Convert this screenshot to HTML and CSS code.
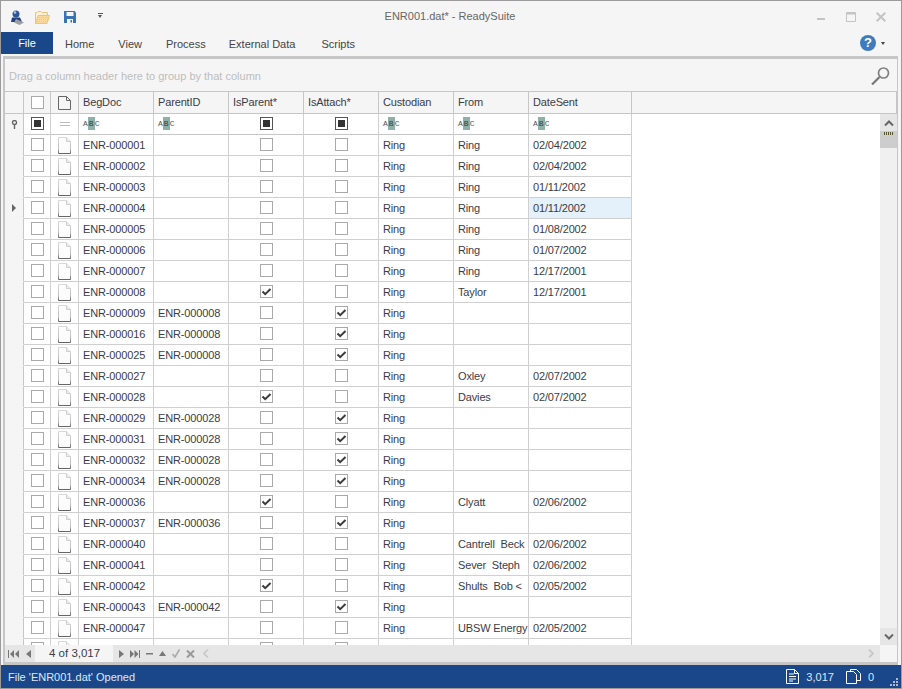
FILE: index.html
```html
<!DOCTYPE html>
<html lang="en">
<head>
<meta charset="utf-8">
<title>ENR001.dat* - ReadySuite</title>
<link rel="stylesheet" href="styles.css">
</head>
<body>
<svg class="defs" width="0" height="0" aria-hidden="true">
  <defs><linearGradient id="docline" x1="0" y1="0" x2="0" y2="1"><stop offset="0" stop-color="#d8d8d8"/><stop offset=".7" stop-color="#c0c0c0"/><stop offset="1" stop-color="#666"/></linearGradient>
  <pattern id="hatch" width="2" height="2" patternUnits="userSpaceOnUse"><rect width="2" height="2" fill="#fbd99c"/><rect width="1" height="1" fill="#f6c67a"/></pattern></defs>
  <symbol id="doc" viewBox="0 0 13 17"><path d="M.5.5H8.5L12.5 4.5V16.5H.5Z" fill="#fcfcfc" stroke="url(#docline)"/><path d="M8.5.5V4.5H12.5" fill="#eee" stroke="#cfcfcf"/></symbol>
  <symbol id="tick" viewBox="0 0 11 11"><path d="M1.5 5.5L4.2 8.2L9.5 3" fill="none" stroke="#3c3c3c" stroke-width="2"/></symbol>
</svg>
<div class="app">
  <header class="titlebar">
    <div class="qat">
      <svg class="qi user" width="14" height="15" viewBox="0 0 14 15"><circle cx="6" cy="4" r="3.5" fill="#2f5597"/><path d="M1 12L2 7.5H10L12 12Z" fill="#1f3f7f"/><path d="M6 9L14 12.5L9.5 15L4 12.5Z" fill="#a0a0a0"/><circle cx="5" cy="2.5" r="1.3" fill="#a9c2e8"/></svg>
      <svg class="qi folder" width="15" height="13" viewBox="0 0 15 13"><path d="M.5 12.5V1.5H2L3 .5H6L7 1.5H12.5V4" fill="#fdf0d6" stroke="#efc27a"/><path d="M.5 12.5L3 4.5H14.5L12 12.5Z" fill="url(#hatch)" stroke="#efc27a"/></svg>
      <svg class="qi save" width="12" height="12" viewBox="0 0 12 12"><path d="M0 0H10.5L12 1.5V12H0Z" fill="#3b73b3"/><path d="M2.5 1H9.5V5H2.5Z" fill="#f5f5f5"/><path d="M3 8H9V12H3Z" fill="#f5f5f5"/><path d="M6.5 9H8V11.5H6.5Z" fill="#3b73b3"/></svg>
      <span class="qdrop"></span>
    </div>
    <div class="wintitle">ENR001.dat* - ReadySuite</div>
    <div class="winbtns">
      <svg class="wmin" width="8" height="10" viewBox="0 0 8 10"><path d="M0 7H8" stroke="#c4c4c4" stroke-width="2"/></svg>
      <svg class="wmax" width="10" height="10" viewBox="0 0 10 10"><path d="M.5 .5H9.5V9.5H.5Z" fill="none" stroke="#c4c4c4"/><path d="M0 1.5H10" stroke="#c4c4c4" stroke-width="2"/></svg>
      <svg class="wcls" width="10" height="10" viewBox="0 0 10 10"><path d="M.7 .7L9.3 9.3M9.3 .7L.7 9.3" stroke="#c4c4c4" stroke-width="2"/></svg>
    </div>
  </header>
  <nav class="tabs">
    <div class="tab file">File</div>
    <div class="tab home">Home</div>
    <div class="tab view">View</div>
    <div class="tab process">Process</div>
    <div class="tab extern">External Data</div>
    <div class="tab scripts">Scripts</div>
    <div class="help"><span class="helpq">?</span><span class="helpdrop"></span></div>
  </nav>
  <main class="frame">
    <div class="grouppanel">
      <span>Drag a column header here to group by that column</span>
      <svg width="19" height="18" viewBox="0 0 19 18"><circle cx="12.5" cy="6" r="5" fill="none" stroke="#808080" stroke-width="1.7"/><path d="M8.5 10L1 17.5" stroke="#777" stroke-width="2.2"/></svg>
    </div>
    <div class="row head">
      <div class="c ind"></div>
      <div class="c chk"><span class="cb"></span></div>
      <div class="c dc"><svg class="d" width="13" height="14" viewBox="0 0 13 14"><path d="M.5.5H8.5L12.5 4.5V13.5H.5Z" fill="none" stroke="#666"/><path d="M8.5.5V4.5H12.5" fill="none" stroke="#666"/></svg></div>
      <div class="c w">BegDoc</div><div class="c w">ParentID</div><div class="c w">IsParent*</div><div class="c w">IsAttach*</div><div class="c w">Custodian</div><div class="c w">From</div><div class="c date">DateSent</div>
      <div class="c rest"></div>
    </div>
    <div class="body">
      <div class="rows">
        <div class="row filter">
          <div class="c ind"><svg width="7" height="9" viewBox="0 0 7 9"><circle cx="3.5" cy="2.5" r="2" fill="none" stroke="#666" stroke-width="1.4"/><path d="M3.5 4V9" stroke="#666" stroke-width="1.4"/></svg></div>
          <div class="c chk"><span class="cb ind-on"><i></i></span></div>
          <div class="c dc"><span class="eq"></span></div>
          <div class="c w"><span class="abc">A<b>B</b>C</span></div><div class="c w"><span class="abc">A<b>B</b>C</span></div>
          <div class="c w mid"><span class="cb ind-on"><i></i></span></div><div class="c w mid"><span class="cb ind-on"><i></i></span></div>
          <div class="c w"><span class="abc">A<b>B</b>C</span></div><div class="c w"><span class="abc">A<b>B</b>C</span></div><div class="c date"><span class="abc">A<b>B</b>C</span></div>
        </div>
        <div class="row"><div class="c ind"></div><div class="c chk"><span class="cb"></span></div><div class="c dc"><svg class="d" width="13" height="17"><use href="#doc"/></svg></div><div class="c w">ENR-000001</div><div class="c w"></div><div class="c w mid"><span class="cb"></span></div><div class="c w mid"><span class="cb"></span></div><div class="c w">Ring</div><div class="c w">Ring</div><div class="c date">02/04/2002</div></div>
        <div class="row"><div class="c ind"></div><div class="c chk"><span class="cb"></span></div><div class="c dc"><svg class="d" width="13" height="17"><use href="#doc"/></svg></div><div class="c w">ENR-000002</div><div class="c w"></div><div class="c w mid"><span class="cb"></span></div><div class="c w mid"><span class="cb"></span></div><div class="c w">Ring</div><div class="c w">Ring</div><div class="c date">02/04/2002</div></div>
        <div class="row"><div class="c ind"></div><div class="c chk"><span class="cb"></span></div><div class="c dc"><svg class="d" width="13" height="17"><use href="#doc"/></svg></div><div class="c w">ENR-000003</div><div class="c w"></div><div class="c w mid"><span class="cb"></span></div><div class="c w mid"><span class="cb"></span></div><div class="c w">Ring</div><div class="c w">Ring</div><div class="c date">01/11/2002</div></div>
        <div class="row"><div class="c ind"><span class="cur"></span></div><div class="c chk"><span class="cb"></span></div><div class="c dc"><svg class="d" width="13" height="17"><use href="#doc"/></svg></div><div class="c w">ENR-000004</div><div class="c w"></div><div class="c w mid"><span class="cb"></span></div><div class="c w mid"><span class="cb"></span></div><div class="c w">Ring</div><div class="c w">Ring</div><div class="c date sel">01/11/2002</div></div>
        <div class="row"><div class="c ind"></div><div class="c chk"><span class="cb"></span></div><div class="c dc"><svg class="d" width="13" height="17"><use href="#doc"/></svg></div><div class="c w">ENR-000005</div><div class="c w"></div><div class="c w mid"><span class="cb"></span></div><div class="c w mid"><span class="cb"></span></div><div class="c w">Ring</div><div class="c w">Ring</div><div class="c date">01/08/2002</div></div>
        <div class="row"><div class="c ind"></div><div class="c chk"><span class="cb"></span></div><div class="c dc"><svg class="d" width="13" height="17"><use href="#doc"/></svg></div><div class="c w">ENR-000006</div><div class="c w"></div><div class="c w mid"><span class="cb"></span></div><div class="c w mid"><span class="cb"></span></div><div class="c w">Ring</div><div class="c w">Ring</div><div class="c date">01/07/2002</div></div>
        <div class="row"><div class="c ind"></div><div class="c chk"><span class="cb"></span></div><div class="c dc"><svg class="d" width="13" height="17"><use href="#doc"/></svg></div><div class="c w">ENR-000007</div><div class="c w"></div><div class="c w mid"><span class="cb"></span></div><div class="c w mid"><span class="cb"></span></div><div class="c w">Ring</div><div class="c w">Ring</div><div class="c date">12/17/2001</div></div>
        <div class="row"><div class="c ind"></div><div class="c chk"><span class="cb"></span></div><div class="c dc"><svg class="d" width="13" height="17"><use href="#doc"/></svg></div><div class="c w">ENR-000008</div><div class="c w"></div><div class="c w mid"><span class="cb on"><svg width="11" height="11"><use href="#tick"/></svg></span></div><div class="c w mid"><span class="cb"></span></div><div class="c w">Ring</div><div class="c w">Taylor</div><div class="c date">12/17/2001</div></div>
        <div class="row"><div class="c ind"></div><div class="c chk"><span class="cb"></span></div><div class="c dc"><svg class="d" width="13" height="17"><use href="#doc"/></svg></div><div class="c w">ENR-000009</div><div class="c w">ENR-000008</div><div class="c w mid"><span class="cb"></span></div><div class="c w mid"><span class="cb on"><svg width="11" height="11"><use href="#tick"/></svg></span></div><div class="c w">Ring</div><div class="c w"></div><div class="c date"></div></div>
        <div class="row"><div class="c ind"></div><div class="c chk"><span class="cb"></span></div><div class="c dc"><svg class="d" width="13" height="17"><use href="#doc"/></svg></div><div class="c w">ENR-000016</div><div class="c w">ENR-000008</div><div class="c w mid"><span class="cb"></span></div><div class="c w mid"><span class="cb on"><svg width="11" height="11"><use href="#tick"/></svg></span></div><div class="c w">Ring</div><div class="c w"></div><div class="c date"></div></div>
        <div class="row"><div class="c ind"></div><div class="c chk"><span class="cb"></span></div><div class="c dc"><svg class="d" width="13" height="17"><use href="#doc"/></svg></div><div class="c w">ENR-000025</div><div class="c w">ENR-000008</div><div class="c w mid"><span class="cb"></span></div><div class="c w mid"><span class="cb on"><svg width="11" height="11"><use href="#tick"/></svg></span></div><div class="c w">Ring</div><div class="c w"></div><div class="c date"></div></div>
        <div class="row"><div class="c ind"></div><div class="c chk"><span class="cb"></span></div><div class="c dc"><svg class="d" width="13" height="17"><use href="#doc"/></svg></div><div class="c w">ENR-000027</div><div class="c w"></div><div class="c w mid"><span class="cb"></span></div><div class="c w mid"><span class="cb"></span></div><div class="c w">Ring</div><div class="c w">Oxley</div><div class="c date">02/07/2002</div></div>
        <div class="row"><div class="c ind"></div><div class="c chk"><span class="cb"></span></div><div class="c dc"><svg class="d" width="13" height="17"><use href="#doc"/></svg></div><div class="c w">ENR-000028</div><div class="c w"></div><div class="c w mid"><span class="cb on"><svg width="11" height="11"><use href="#tick"/></svg></span></div><div class="c w mid"><span class="cb"></span></div><div class="c w">Ring</div><div class="c w">Davies</div><div class="c date">02/07/2002</div></div>
        <div class="row"><div class="c ind"></div><div class="c chk"><span class="cb"></span></div><div class="c dc"><svg class="d" width="13" height="17"><use href="#doc"/></svg></div><div class="c w">ENR-000029</div><div class="c w">ENR-000028</div><div class="c w mid"><span class="cb"></span></div><div class="c w mid"><span class="cb on"><svg width="11" height="11"><use href="#tick"/></svg></span></div><div class="c w">Ring</div><div class="c w"></div><div class="c date"></div></div>
        <div class="row"><div class="c ind"></div><div class="c chk"><span class="cb"></span></div><div class="c dc"><svg class="d" width="13" height="17"><use href="#doc"/></svg></div><div class="c w">ENR-000031</div><div class="c w">ENR-000028</div><div class="c w mid"><span class="cb"></span></div><div class="c w mid"><span class="cb on"><svg width="11" height="11"><use href="#tick"/></svg></span></div><div class="c w">Ring</div><div class="c w"></div><div class="c date"></div></div>
        <div class="row"><div class="c ind"></div><div class="c chk"><span class="cb"></span></div><div class="c dc"><svg class="d" width="13" height="17"><use href="#doc"/></svg></div><div class="c w">ENR-000032</div><div class="c w">ENR-000028</div><div class="c w mid"><span class="cb"></span></div><div class="c w mid"><span class="cb on"><svg width="11" height="11"><use href="#tick"/></svg></span></div><div class="c w">Ring</div><div class="c w"></div><div class="c date"></div></div>
        <div class="row"><div class="c ind"></div><div class="c chk"><span class="cb"></span></div><div class="c dc"><svg class="d" width="13" height="17"><use href="#doc"/></svg></div><div class="c w">ENR-000034</div><div class="c w">ENR-000028</div><div class="c w mid"><span class="cb"></span></div><div class="c w mid"><span class="cb on"><svg width="11" height="11"><use href="#tick"/></svg></span></div><div class="c w">Ring</div><div class="c w"></div><div class="c date"></div></div>
        <div class="row"><div class="c ind"></div><div class="c chk"><span class="cb"></span></div><div class="c dc"><svg class="d" width="13" height="17"><use href="#doc"/></svg></div><div class="c w">ENR-000036</div><div class="c w"></div><div class="c w mid"><span class="cb on"><svg width="11" height="11"><use href="#tick"/></svg></span></div><div class="c w mid"><span class="cb"></span></div><div class="c w">Ring</div><div class="c w">Clyatt</div><div class="c date">02/06/2002</div></div>
        <div class="row"><div class="c ind"></div><div class="c chk"><span class="cb"></span></div><div class="c dc"><svg class="d" width="13" height="17"><use href="#doc"/></svg></div><div class="c w">ENR-000037</div><div class="c w">ENR-000036</div><div class="c w mid"><span class="cb"></span></div><div class="c w mid"><span class="cb on"><svg width="11" height="11"><use href="#tick"/></svg></span></div><div class="c w">Ring</div><div class="c w"></div><div class="c date"></div></div>
        <div class="row"><div class="c ind"></div><div class="c chk"><span class="cb"></span></div><div class="c dc"><svg class="d" width="13" height="17"><use href="#doc"/></svg></div><div class="c w">ENR-000040</div><div class="c w"></div><div class="c w mid"><span class="cb"></span></div><div class="c w mid"><span class="cb"></span></div><div class="c w">Ring</div><div class="c w">Cantrell&nbsp; Beck</div><div class="c date">02/06/2002</div></div>
        <div class="row"><div class="c ind"></div><div class="c chk"><span class="cb"></span></div><div class="c dc"><svg class="d" width="13" height="17"><use href="#doc"/></svg></div><div class="c w">ENR-000041</div><div class="c w"></div><div class="c w mid"><span class="cb"></span></div><div class="c w mid"><span class="cb"></span></div><div class="c w">Ring</div><div class="c w">Sever&nbsp; Steph</div><div class="c date">02/06/2002</div></div>
        <div class="row"><div class="c ind"></div><div class="c chk"><span class="cb"></span></div><div class="c dc"><svg class="d" width="13" height="17"><use href="#doc"/></svg></div><div class="c w">ENR-000042</div><div class="c w"></div><div class="c w mid"><span class="cb on"><svg width="11" height="11"><use href="#tick"/></svg></span></div><div class="c w mid"><span class="cb"></span></div><div class="c w">Ring</div><div class="c w">Shults&nbsp; Bob &lt;</div><div class="c date">02/05/2002</div></div>
        <div class="row"><div class="c ind"></div><div class="c chk"><span class="cb"></span></div><div class="c dc"><svg class="d" width="13" height="17"><use href="#doc"/></svg></div><div class="c w">ENR-000043</div><div class="c w">ENR-000042</div><div class="c w mid"><span class="cb"></span></div><div class="c w mid"><span class="cb on"><svg width="11" height="11"><use href="#tick"/></svg></span></div><div class="c w">Ring</div><div class="c w"></div><div class="c date"></div></div>
        <div class="row"><div class="c ind"></div><div class="c chk"><span class="cb"></span></div><div class="c dc"><svg class="d" width="13" height="17"><use href="#doc"/></svg></div><div class="c w">ENR-000047</div><div class="c w"></div><div class="c w mid"><span class="cb"></span></div><div class="c w mid"><span class="cb"></span></div><div class="c w">Ring</div><div class="c w">UBSW Energy</div><div class="c date">02/05/2002</div></div>
        <div class="row"><div class="c ind"></div><div class="c chk"><span class="cb"></span></div><div class="c dc"><svg class="d" width="13" height="17"><use href="#doc"/></svg></div><div class="c w"></div><div class="c w"></div><div class="c w mid"><span class="cb"></span></div><div class="c w mid"><span class="cb"></span></div><div class="c w"></div><div class="c w"></div><div class="c date"></div></div>
      </div>
      <div class="vscroll">
        <div class="sbtn"><svg width="10" height="6" viewBox="0 0 10 6"><path d="M1 5.5L5 1.5L9 5.5" fill="none" stroke="#666" stroke-width="2"/></svg></div>
        <div class="thumb"><div class="grab"></div></div>
        <div class="track"></div>
        <div class="sbtn"><svg width="10" height="6" viewBox="0 0 10 6"><path d="M1 .5L5 4.5L9 .5" fill="none" stroke="#666" stroke-width="2"/></svg></div>
      </div>
    </div>
    <div class="navbar">
      <div class="navleft">
        <svg width="11" height="8" viewBox="0 0 11 8"><path d="M0 0H1V8H0ZM6 0V8L2 4ZM11 0V8L7 4Z" fill="#777"/></svg>
        <svg width="5" height="8" viewBox="0 0 5 8"><path d="M5 0V8L0 4Z" fill="#777"/></svg>
      </div>
      <div class="count">4 of 3,017</div>
      <div class="navright">
        <svg width="5" height="8" viewBox="0 0 5 8"><path d="M0 0V8L5 4Z" fill="#777"/></svg>
        <svg width="10" height="8" viewBox="0 0 10 8"><path d="M0 0V8L4 4ZM4.5 0V8L8.5 4ZM9 0H10V8H9Z" fill="#777"/></svg>
        <svg width="7" height="2" viewBox="0 0 7 2"><path d="M0 0H7V1.5H0Z" fill="#777"/></svg>
        <svg width="7" height="5" viewBox="0 0 7 5"><path d="M3.5 0L7 5H0Z" fill="#777"/></svg>
        <svg width="8" height="9" viewBox="0 0 8 9"><path d="M.5 5L3 8L7.5 .5" fill="none" stroke="#aaa" stroke-width="1.6"/></svg>
        <svg width="9" height="8" viewBox="0 0 9 8"><path d="M1 .5L8 7.5M8 .5L1 7.5" stroke="#999" stroke-width="2"/></svg>
        <svg class="navprev" width="6" height="9" viewBox="0 0 6 9"><path d="M5 .5L1 4.5L5 8.5" fill="none" stroke="#c8c8c8" stroke-width="1.6"/></svg>
      </div>
      <div class="navfill"><svg width="6" height="9" viewBox="0 0 6 9"><path d="M1 .5L5 4.5L1 8.5" fill="none" stroke="#c8c8c8" stroke-width="1.8"/></svg></div>
      <div class="corner"></div>
    </div>
  </main>
  <footer class="status">
    <div class="msg">File 'ENR001.dat' Opened</div>
    <div class="stat">
      <svg width="13" height="15" viewBox="0 0 13 15"><path d="M.5.5H8.5L12.5 4.5V14.5H.5Z" fill="none" stroke="#fff"/><path d="M8.5.5V4.5H12.5M3 5H8M3 7.5H10M3 10H10M3 12H7" fill="none" stroke="#fff"/></svg>
      <span>3,017</span>
    </div>
    <div class="stat two">
      <svg width="15" height="15" viewBox="0 0 15 15"><path d="M4.5 2.5V.5H10.5L14.5 4.5V11.5H10.5" fill="none" stroke="#fff"/><path d="M.5 2.5H7.5L10.5 5.5V14.5H.5Z" fill="none" stroke="#fff"/></svg>
      <span>0</span>
    </div>
    <svg class="grip" width="10" height="10" viewBox="0 0 10 10"><path d="M7 1H9V3H7ZM4 4H6V6H4ZM7 4H9V6H7ZM1 7H3V9H1ZM4 7H6V9H4ZM7 7H9V9H7Z" fill="#a8b8d0"/></svg>
  </footer>
</div>
</body>
</html>
```
FILE: styles.css
```css
* { box-sizing: border-box; }
html, body { margin: 0; padding: 0; }
body { width: 902px; height: 689px; overflow: hidden; font-family: "Liberation Sans", sans-serif; font-size: 11px; color: #3c3c46; background: #f5f5f5; }
.defs { position: absolute; }
.app { width: 902px; height: 689px; display: flex; flex-direction: column; border: 1px solid #9b9b9b; background: #f5f5f5; }

.titlebar { height: 31px; flex: none; display: flex; align-items: center; padding: 0 15px 0 9px; position: relative; }
.qat { display: flex; align-items: center; }
.qi { display: block; flex: none; }
.user { margin-top: 1px; }
.folder { margin-left: 11px; margin-top: 1px; }
.save { margin-left: 14px; margin-top: 1px; }
.qdrop { width: 5px; height: 5px; margin-left: 22px; border-top: 1px solid #555; position: relative; margin-top: -2px; }
.qdrop::after { content: ""; position: absolute; left: 0; top: 1px; border: 2.5px solid transparent; border-top: 3px solid #555; border-bottom: 0; }
.wintitle { position: absolute; left: 0; right: 2px; text-align: center; color: #666; font-size: 11px; top: 9px; }
.winbtns { margin-left: auto; display: flex; gap: 20px; align-items: center; margin-top: 1px; }
.wmin { margin-right: 1px; }

.tabs { height: 24px; flex: none; display: flex; align-items: flex-start; }
.tab { height: 22px; line-height: 24px; color: #444; flex: none; }
.tab.file { width: 52px; background: #19478a; color: #fff; text-align: center; line-height: 22px; }
.home { margin-left: 12px; }
.view { margin-left: 24px; }
.process { margin-left: 24px; }
.extern { margin-left: 23px; }
.scripts { margin-left: 26px; }
.help { margin-left: auto; margin-right: 16px; margin-top: 3px; display: flex; align-items: center; gap: 5px; }
.helpq { width: 16px; height: 16px; border-radius: 50%; background: #3f7cbf; color: #fff; font: bold 13px/16px "Liberation Sans", sans-serif; text-align: center; }
.helpdrop { border: 2.5px solid transparent; border-top: 3px solid #444; border-bottom: 0; }

.frame { flex: 1; min-height: 0; margin: 0 3px 0 2px; border: 3px solid #c6c6c6; border-left-width: 2px; border-right-width: 1px; display: flex; flex-direction: column; background: #fff; }
.grouppanel { height: 33px; flex: none; display: flex; align-items: center; justify-content: space-between; padding: 2px 7px 0 4px; background: #f5f5f5; color: #bdbdbd; border-bottom: 1px solid #c6c6c6; }

.row { height: 21px; flex: none; display: flex; }
.c { height: 100%; display: flex; align-items: center; padding: 0 0 1px 4px; letter-spacing: -.15px; border-right: 1px solid #d0d0d0; border-bottom: 1px solid #d0d0d0; white-space: nowrap; overflow: hidden; flex: none; }
.ind { width: 19px; background: #f5f5f5; justify-content: center; padding: 0; border-right-color: #c6c6c6; border-bottom-color: #f5f5f5; }
.chk { width: 27px; padding: 0 0 1px; justify-content: center; }
.dc { width: 28px; padding: 0; justify-content: center; }
.w { width: 75px; }
.date { width: 103px; }
.mid { justify-content: center; padding: 0 0 1px; }
.sel { background: #e4f0fa; }
.rest { flex: 1; }
.head { height: 22px; background: #f5f5f5; }
.head .c { border-bottom-color: #c6c6c6; border-right-color: #c6c6c6; }
.filter .c { border-bottom-color: #c6c6c6; }
.filter .ind { border-bottom-color: #f5f5f5; }

.cb { width: 13px; height: 13px; border: 1px solid #a9a9a9; background: #fff; display: block; flex: none; }
.cb svg { display: block; }
.ind-on { border-color: #555; }
.ind-on i { display: block; width: 7px; height: 7px; margin: 2px; background: #333; }
.eq { width: 10px; height: 4px; border-top: 1px solid #bbb; border-bottom: 1px solid #bbb; }
.d { display: block; }
.abc { font: 8px/10px "Liberation Mono", monospace; color: #555; letter-spacing: 0; margin-top: 1px; }
.abc b { font-weight: normal; background: #8fb0a8; color: #2f3f3c; padding: 2px 1px; }
.cur { border: 4px solid transparent; border-left: 4px solid #666; border-right: 0; }

.body { flex: 1; min-height: 0; display: flex; overflow: hidden; }
.rows { flex: 1; min-width: 0; overflow: hidden; }
.vscroll { width: 17px; flex: none; display: flex; flex-direction: column; background: #f0f0f0; }
.sbtn { height: 17px; flex: none; display: flex; align-items: center; justify-content: center; background: #e6e6e6; }
.thumb { height: 17px; flex: none; background: #cdcdcd; padding: 1px 4px 0; }
.grab { height: 3px; background: repeating-linear-gradient(90deg, #55532f 0 1px, #d8d6a0 1px 2px); }
.track { flex: 1; }

.navbar { height: 17px; flex: none; display: flex; align-items: center; background: #e6e6e6; }
.navleft { width: 30px; display: flex; align-items: center; gap: 7px; padding-left: 3px; flex: none; }
.count { width: 78px; height: 100%; background: #f5f5f5; padding-left: 14px; line-height: 17px; flex: none; font-size: 11.5px; }
.navright { display: flex; align-items: center; gap: 6px; padding-left: 6px; }
.navprev { margin-left: 2px; }
.navfill { flex: 1; display: flex; justify-content: flex-end; padding-right: 6px; }
.corner { width: 17px; height: 100%; background: #f5f5f5; }

.status { height: 23px; flex: none; background: #19478a; color: #dfe8f5; display: flex; align-items: center; padding-left: 7px; position: relative; }
.msg { flex: 1; }
.stat { display: flex; align-items: center; gap: 7px; margin-right: 12px; }
.stat.two { margin-right: 27px; }
.grip { position: absolute; right: 2px; bottom: 1px; }
```
